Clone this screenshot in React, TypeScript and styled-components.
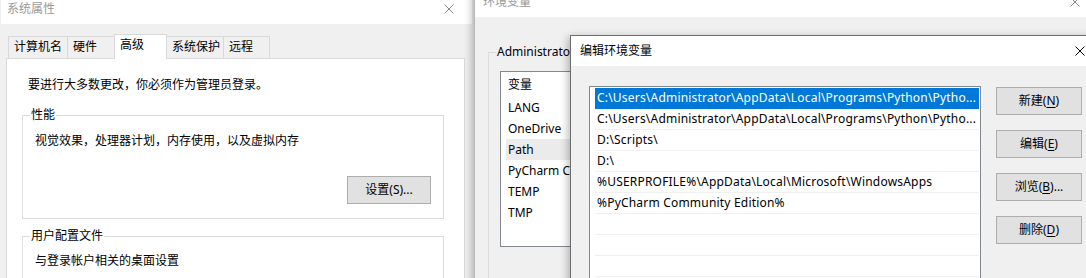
import React from "react";
import styled, { createGlobalStyle } from "styled-components";

const Global = createGlobalStyle`
  html, body { margin: 0; padding: 0; width: 1086px; height: 278px; overflow: hidden; background: #f0f0f0; }
  body { font-family: "Noto Sans", "Noto Sans CJK SC", sans-serif; font-size: 12px; color: #000; }
  * { box-sizing: border-box; }
`;

const Desktop = styled.div`
  position: relative;
  width: 1086px;
  height: 278px;
  overflow: hidden;
  background: #f0f0f0;
`;

const Window = styled.div<{ $left: number; $top: number; $width: number; $height: number; $z: number; $edge: string; $shadow?: boolean }>`
  position: absolute;
  left: ${(p) => p.$left}px;
  top: ${(p) => p.$top}px;
  width: ${(p) => p.$width}px;
  height: ${(p) => p.$height}px;
  z-index: ${(p) => p.$z};
  display: flex;
  flex-direction: column;
  background: #f0f0f0;
  border: 1px solid ${(p) => p.$edge};
  box-shadow: ${(p) => (p.$shadow ? "-2px 2px 8px rgba(0,0,0,0.28)" : "none")};
`;

const TitleBar = styled.div<{ $active?: boolean; $pad: number }>`
  flex: none;
  height: 30px;
  background: #fff;
  display: flex;
  align-items: center;
  justify-content: space-between;
  padding-left: ${(p) => p.$pad}px;
  color: ${(p) => (p.$active ? "#000" : "#999")};
  font-size: 12px;
  line-height: 16px;
`;

const CloseBox = styled.div`
  width: 46px;
  height: 30px;
  display: flex;
  align-items: center;
  justify-content: center;
`;

const CloseIcon = ({ color }: { color: string }) => (
  <CloseBox>
    <svg width="10" height="10" viewBox="0 0 10 10">
      <path d="M0.5 0.5 L9.5 9.5 M9.5 0.5 L0.5 9.5" stroke={color} strokeWidth="1" fill="none" />
    </svg>
  </CloseBox>
);

/* ---------- System properties ---------- */

const TabStrip = styled.div`
  flex: none;
  display: flex;
  align-items: flex-end;
  height: 24px;
  margin: 10px 0 0 7px;
  position: relative;
  z-index: 1;
`;

const Tab = styled.div<{ $w: number; $active?: boolean }>`
  width: ${(p) => p.$w}px;
  height: ${(p) => (p.$active ? 25 : 22)}px;
  margin-left: -1px;
  margin-bottom: ${(p) => (p.$active ? -1 : 0)}px;
  border: 1px solid #d9d9d9;
  border-bottom: none;
  background: ${(p) => (p.$active ? "#fff" : "#f0f0f0")};
  padding-left: 5px;
  line-height: 20px;
  position: relative;
  z-index: ${(p) => (p.$active ? 2 : 1)};
  white-space: nowrap;
  &:first-child { margin-left: 0; }
`;

const TabPanel = styled.div`
  flex: 1;
  display: flex;
  flex-direction: column;
  margin: 0 7px 0 5px;
  background: #fff;
  border: 1px solid #d9d9d9;
  padding: 18px 20px 0 15px;
`;

const Note = styled.div`
  line-height: 16px;
  padding-left: 6px;
`;

const GroupBox = styled.div<{ $top: number; $bottom: number; $bg: string; $pad: number }>`
  margin-top: ${(p) => p.$top}px;
  border: 1px solid #dcdcdc;
  background: ${(p) => p.$bg};
  padding: 0 ${(p) => p.$pad}px ${(p) => p.$bottom}px ${(p) => p.$pad}px;
  display: flex;
  flex-direction: column;
`;

const GroupLabel = styled.div<{ $shift: number }>`
  align-self: flex-start;
  margin: -9px 0 0 ${(p) => p.$shift}px;
  padding: 0 1px;
  line-height: 16px;
  background: inherit;
  white-space: nowrap;
`;

const GroupText = styled.div<{ $gap: number }>`
  line-height: 16px;
  margin-top: ${(p) => p.$gap}px;
`;

const ButtonRow = styled.div`
  display: flex;
  justify-content: flex-end;
  margin-top: 27px;
`;

const PushButton = styled.div<{ $w: number }>`
  width: ${(p) => p.$w}px;
  height: 28px;
  background: #e1e1e1;
  border: 1px solid #adadad;
  display: flex;
  align-items: center;
  justify-content: center;
  line-height: 16px;
  white-space: nowrap;
`;

const Mnemonic = styled.span`
  text-decoration: underline;
  text-underline-offset: 2px;
`;

/* ---------- Environment variables ---------- */

const EnvBody = styled.div`
  flex: 1;
  display: flex;
  flex-direction: column;
  padding: 35px 0 0 13px;
`;

const VarList = styled.div`
  margin-top: 11px;
  width: 400px;
  height: 176px;
  background: #fff;
  border: 1px solid #828790;
  padding: 0 0 0 5px;
`;

const VarHeader = styled.div`
  height: 25px;
  line-height: 25px;
  padding-left: 2px;
`;

const VarRow = styled.div<{ $selected?: boolean }>`
  height: 21px;
  line-height: 21px;
  padding-left: 2px;
  background: ${(p) => (p.$selected ? "#ebebeb" : "transparent")};
`;

const NameCell = styled.div`
  width: 150px;
  white-space: nowrap;
  overflow: hidden;
  text-overflow: ellipsis;
`;

/* ---------- Edit dialog ---------- */

const DialogBody = styled.div`
  flex: 1;
  display: flex;
  gap: 15px;
  padding: 20px 0 0 18px;
`;

const PathList = styled.div`
  width: 392px;
  height: 220px;
  background: #fff;
  border: 1px solid #828790;
  padding: 1px 1px 0 5px;
`;

const PathRow = styled.div<{ $selected?: boolean }>`
  height: 21px;
  line-height: 20px;
  padding-left: 2px;
  letter-spacing: 0.2px;
  white-space: nowrap;
  overflow: hidden;
  background: ${(p) => (p.$selected ? "#0078d7" : "#fff")};
  color: ${(p) => (p.$selected ? "#fff" : "#000")};
  border-bottom: 1px solid ${(p) => (p.$selected ? "#0078d7" : "#f0f0f0")};
`;

const ButtonColumn = styled.div`
  display: flex;
  flex-direction: column;
  gap: 15px;
  padding-top: 1px;
`;

const paths = [
  "C:\\Users\\Administrator\\AppData\\Local\\Programs\\Python\\Pytho...",
  "C:\\Users\\Administrator\\AppData\\Local\\Programs\\Python\\Pytho...",
  "D:\\Scripts\\",
  "D:\\",
  "%USERPROFILE%\\AppData\\Local\\Microsoft\\WindowsApps",
  "%PyCharm Community Edition%",
  "",
  "",
  "",
];

const vars = ["LANG", "OneDrive", "Path", "PyCharm Community Edition", "TEMP", "TMP"];

export default function App() {
  return (
    <>
      <Global />
      <Desktop>
        <Window $left={0} $top={-7} $width={473} $height={300} $z={1} $edge="transparent">
          <TitleBar $pad={6}>
            <span>系统属性</span>
            <CloseIcon color="#8a8a8a" />
          </TitleBar>
          <TabStrip>
            <Tab $w={60}>计算机名</Tab>
            <Tab $w={48}>硬件</Tab>
            <Tab $w={53} $active>高级</Tab>
            <Tab $w={58}>系统保护</Tab>
            <Tab $w={47}>远程</Tab>
          </TabStrip>
          <TabPanel>
            <Note>要进行大多数更改，你必须作为管理员登录。</Note>
            <GroupBox $top={22} $bottom={14} $bg="#fff" $pad={12}>
              <GroupLabel $shift={-5}>性能</GroupLabel>
              <GroupText $gap={10}>视觉效果，处理器计划，内存使用，以及虚拟内存</GroupText>
              <ButtonRow>
                <PushButton $w={84}>设置(S)...</PushButton>
              </ButtonRow>
            </GroupBox>
            <GroupBox $top={17} $bottom={20} $bg="#fff" $pad={12}>
              <GroupLabel $shift={-5}>用户配置文件</GroupLabel>
              <GroupText $gap={9}>与登录帐户相关的桌面设置</GroupText>
            </GroupBox>
          </TabPanel>
        </Window>

        <Window $left={474} $top={-14} $width={625} $height={320} $z={2} $edge="#b9b9b9" $shadow>
          <TitleBar $pad={8}>
            <span>环境变量</span>
            <CloseIcon color="#8a8a8a" />
          </TitleBar>
          <EnvBody>
            <GroupBox $top={0} $bottom={50} $bg="#f0f0f0" $pad={11}>
              <GroupLabel $shift={-4}>Administrator 的用户变量(U)</GroupLabel>
              <VarList>
                <VarHeader>变量</VarHeader>
                {vars.map((v) => (
                  <VarRow key={v} $selected={v === "Path"}>
                    <NameCell>{v}</NameCell>
                  </VarRow>
                ))}
              </VarList>
            </GroupBox>
          </EnvBody>
        </Window>

        <Window $left={570} $top={35} $width={534} $height={300} $z={3} $edge="#6e6e6e" $shadow>
          <TitleBar $active $pad={9}>
            <span>编辑环境变量</span>
            <CloseIcon color="#000" />
          </TitleBar>
          <DialogBody>
            <PathList>
              {paths.map((p, i) => (
                <PathRow key={i} $selected={i === 0}>{p}</PathRow>
              ))}
            </PathList>
            <ButtonColumn>
              <PushButton $w={86}>新建(<Mnemonic>N</Mnemonic>)</PushButton>
              <PushButton $w={86}>编辑(<Mnemonic>E</Mnemonic>)</PushButton>
              <PushButton $w={86}>浏览(<Mnemonic>B</Mnemonic>)...</PushButton>
              <PushButton $w={86}>删除(<Mnemonic>D</Mnemonic>)</PushButton>
            </ButtonColumn>
          </DialogBody>
        </Window>
      </Desktop>
    </>
  );
}
